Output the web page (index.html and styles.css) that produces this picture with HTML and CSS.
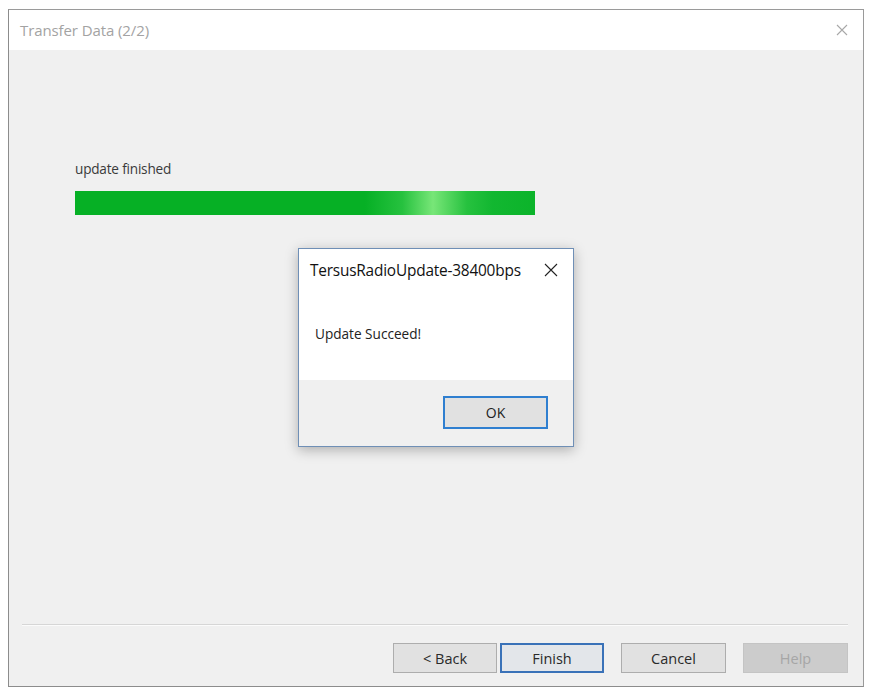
FILE: index.html
```html
<!DOCTYPE html>
<html>
<head>
<meta charset="utf-8">
<link rel="stylesheet" href="styles.css">
</head>
<body>
<div class="window">
  <div class="titlebar">
    <span class="title">Transfer Data (2/2)</span>
    <svg class="close" width="12" height="12" viewBox="0 0 12 12"><path d="M1 1L11 11M11 1L1 11" stroke="#a8a8a8" stroke-width="1.1" fill="none"/></svg>
  </div>
  <div class="content">
    <div class="main">
      <div class="status">update finished</div>
      <div class="progress"><div class="shine"></div></div>
    </div>
    <div class="sep"></div>
    <div class="buttons">
      <button class="btn">&lt; Back</button>
      <button class="btn default">Finish</button>
      <button class="btn wide">Cancel</button>
      <button class="btn wide disabled">Help</button>
    </div>
  </div>
</div>

<div class="msgbox">
  <div class="msg-title">
    <span>TersusRadioUpdate-38400bps</span>
    <svg width="14" height="14" viewBox="0 0 14 14"><path d="M1 1L13 13M13 1L1 13" stroke="#222" stroke-width="1.1" fill="none"/></svg>
  </div>
  <div class="msg-body">Update Succeed!</div>
  <div class="msg-foot">
    <button class="ok">OK</button>
  </div>
</div>
</body>
</html>
```

FILE: styles.css
```css
html, body {
  margin: 0;
  padding: 0;
  background: #ffffff;
  font-family: "Open Sans", "Noto Sans", Arial, sans-serif;
}
.window {
  margin: 9px 0 0 8px;
  width: 856px;
  height: 678px;
  border: 1px solid #9a9a9a;
  border-left-color: #8c8c8c;
  border-bottom-color: #8c8c8c;
  box-sizing: border-box;
  display: flex;
  flex-direction: column;
  background: #f0f0f0;
}
.titlebar {
  height: 40px;
  background: #ffffff;
  display: flex;
  align-items: center;
  justify-content: space-between;
  padding: 0 15px 0 11px;
  flex: none;
}
.title {
  color: #a3a3a3;
  font-size: 15px;
  letter-spacing: -0.1px;
}
.content {
  flex: 1;
  display: flex;
  flex-direction: column;
}
.main {
  flex: 1;
  padding: 110px 0 0 66px;
}
.status {
  font-size: 13.6px;
  color: #3a3a3a;
  letter-spacing: -0.2px;
  line-height: 18px;
}
.progress {
  margin-top: 13px;
  width: 460px;
  height: 24px;
  background: #06b025;
  position: relative;
  overflow: hidden;
}
.shine {
  position: absolute;
  left: 290px;
  top: 0;
  width: 170px;
  height: 24px;
  background: linear-gradient(90deg, rgba(40,200,70,0) 0%, rgba(60,205,80,0.6) 22%, rgba(120,230,120,1) 40%, rgba(60,205,80,0.6) 60%, rgba(30,190,60,0.5) 75%, rgba(20,185,50,0.4) 100%);
}
.sep {
  margin: 0 15px 0 13px;
  height: 2px;
  border-top: 1px solid #d6d6d6;
  border-bottom: 1px solid #fbfbfb;
  box-sizing: border-box;
}
.buttons {
  display: flex;
  justify-content: flex-end;
  gap: 3px;
  padding: 17px 15px 13px 0;
}
.btn {
  width: 104px;
  height: 30px;
  background: #e1e1e1;
  border: 1px solid #adadad;
  font-family: "Open Sans", "Noto Sans", Arial, sans-serif;
  font-size: 14.5px;
  color: #2a2a2a;
  padding: 0;
}
.btn.wide { width: 105px; margin-left: 14px; }
.btn.default {
  border: 2px solid #3a72b8;
  background: #e3e6ea;
}
.btn.disabled {
  background: #cccccc;
  border-color: #c4c4c4;
  color: #a6a6a6;
}
.msgbox {
  position: absolute;
  left: 298px;
  top: 248px;
  width: 276px;
  height: 199px;
  box-sizing: border-box;
  border: 1px solid #6f8fb6;
  background: #ffffff;
  box-shadow: 0 3px 12px rgba(0,0,0,0.28);
  display: flex;
  flex-direction: column;
}
.msg-title {
  height: 42px;
  display: flex;
  align-items: center;
  justify-content: space-between;
  padding: 0 15px 0 11px;
  font-size: 15.4px;
  color: #111;
  letter-spacing: -0.2px;
}
.msg-body {
  flex: 1;
  padding: 33px 0 0 16px;
  font-size: 13.6px;
  color: #222;
  box-sizing: border-box;
}
.msg-foot {
  height: 66px;
  background: #f0f0f0;
  display: flex;
  justify-content: flex-end;
  align-items: flex-start;
  padding: 16px 25px 0 0;
  box-sizing: border-box;
}
.ok {
  width: 105px;
  height: 33px;
  background: #e1e1e1;
  border: 2px solid #2f7fd0;
  font-family: "Open Sans", "Noto Sans", Arial, sans-serif;
  font-size: 14px;
  color: #222;
}
```
